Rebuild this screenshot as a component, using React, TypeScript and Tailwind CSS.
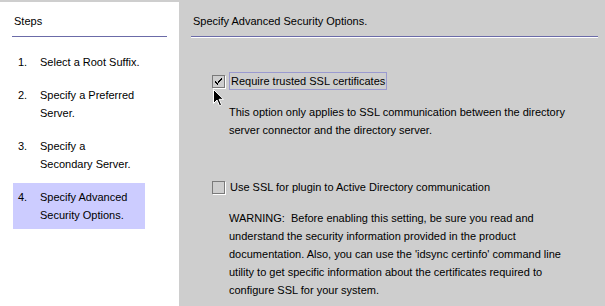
import React from 'react';

const steps: { n: string; lines: string[]; active?: boolean }[] = [
  { n: '1.', lines: ['Select a Root Suffix.'] },
  { n: '2.', lines: ['Specify a Preferred', 'Server.'] },
  { n: '3.', lines: ['Specify a', 'Secondary Server.'] },
  { n: '4.', lines: ['Specify Advanced', 'Security Options.'], active: true },
];

const CheckBox: React.FC<{ checked?: boolean }> = ({ checked }) => (
  <div className="w-[13px] h-[13px] shrink-0 border border-[#7a7a7a] shadow-[1px_1px_0_#ffffff] flex items-center justify-center">
    {checked && (
      <svg width="9" height="9" viewBox="0 0 9 9">
        <path d="M1 4h1v1h1v1h1V4h1V3h1V2h1V1h1v2H7v1H6v1H5v1H4v2H3V7H2V6H1z" fill="#000" />
      </svg>
    )}
  </div>
);

export default function App() {
  return (
    <div className="w-[605px] h-[306px] overflow-hidden bg-[#cecece] flex pt-[2px] font-['Liberation_Sans',Arial,sans-serif] text-[11px] leading-[18px] text-black">
      {/* Steps panel */}
      <div className="w-[179px] h-full bg-white pl-[12px] pr-[12px]">
        <div className="pt-[10px] pl-[2px] pb-[6px] border-b border-[#6b6ba8]">Steps</div>
        <div className="mt-[11px] flex flex-col gap-[5px]">
          {steps.map((s) => (
            <div
              key={s.n}
              className={`ml-[1px] w-[132px] py-[5px] pl-[5px] flex ${s.active ? 'bg-[#ccccff]' : ''}`}
            >
              <span className="w-[22px] shrink-0">{s.n}</span>
              <span className="whitespace-nowrap">
                {s.lines.map((l, i) => (
                  <div key={i}>{l}</div>
                ))}
              </span>
            </div>
          ))}
        </div>
      </div>

      {/* Options panel */}
      <div className="flex-1 pl-[12px] pr-[7px]">
        <div className="pt-[10px] pl-[2px] pb-[6px] border-b border-[#6b6ba8] shadow-[0_1px_0_#ffffff]">
          Specify Advanced Security Options.
        </div>

        <div className="relative mt-[35px] ml-[21px] flex items-center gap-[4px]">
          <CheckBox checked />
          <span className="border border-[#9a9ad0] px-[1px] leading-[16px]">Require trusted SSL certificates</span>
          <svg className="absolute left-[1px] top-[17px]" width="11" height="18" viewBox="0 0 11 18">
            <path d="M0.5 0.5V14.5L4 11L6.5 16.8L8.6 15.9L6.1 10.3H10.5Z" fill="#000" stroke="#fff" strokeWidth="1" />
          </svg>
        </div>
        <p className="mt-[13px] ml-[38px] whitespace-nowrap">
          This option only applies to SSL communication between the directory
          <br />
          server connector and the directory server.
        </p>

        <div className="mt-[39px] ml-[21px] flex items-center gap-[5px] h-[18px]">
          <CheckBox />
          <span>Use SSL for plugin to Active Directory communication</span>
        </div>
        <p className="mt-[13px] ml-[38px] whitespace-nowrap">
          WARNING:&nbsp; Before enabling this setting, be sure you read and
          <br />
          understand the security information provided in the product
          <br />
          documentation. Also, you can use the 'idsync certinfo' command line
          <br />
          utility to get specific information about the certificates required to
          <br />
          configure SSL for your system.
        </p>
      </div>
    </div>
  );
}
